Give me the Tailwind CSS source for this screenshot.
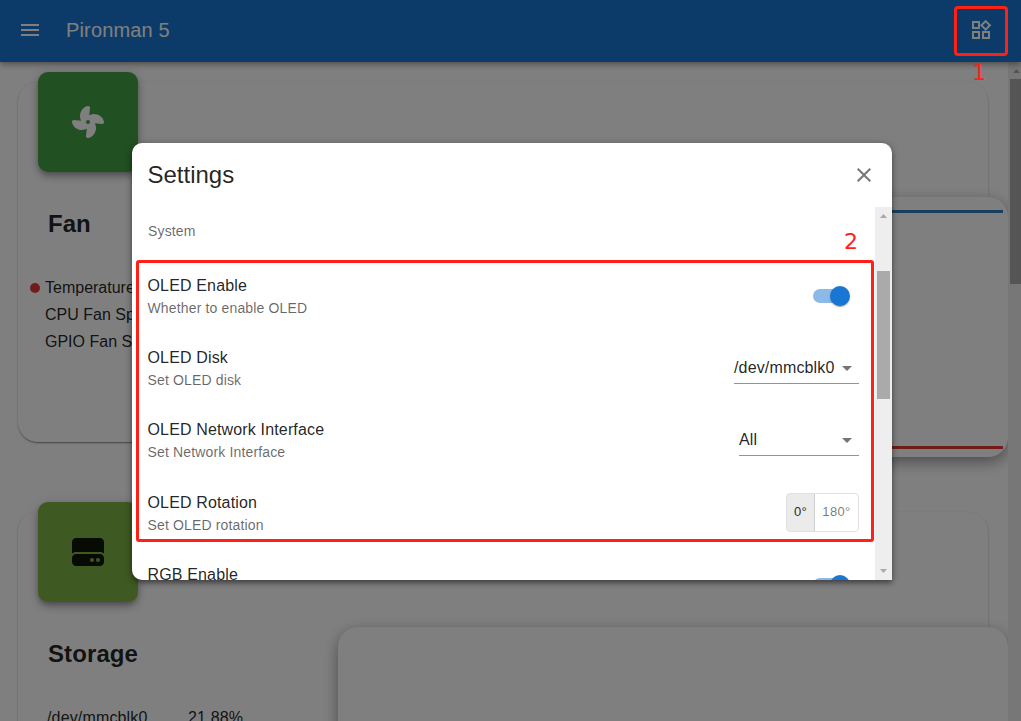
<!DOCTYPE html>
<html lang="en">
<head>
<meta charset="utf-8">
<title>Pironman 5</title>
<script src="https://cdn.jsdelivr.net/npm/@tailwindcss/browser@4"></script>
</head>
<body class="relative flex h-[721px] w-[1021px] flex-col overflow-hidden bg-white font-['Liberation_Sans',Arial,sans-serif] text-base text-black/87">

  <header class="z-10 flex h-[62px] shrink-0 items-center bg-[#1976d2] pr-7 pb-0.5 pl-[18px] text-white shadow-[0_2px_4px_-1px_rgba(0,0,0,0.2),0_4px_5px_0_rgba(0,0,0,0.14),0_1px_10px_0_rgba(0,0,0,0.12)]">
    <svg class="size-6 fill-current" viewBox="0 0 24 24"><path d="M3 18h18v-2H3v2zm0-5h18v-2H3v2zm0-7v2h18V6H3z"/></svg>
    <h1 class="ml-6 flex-1 text-xl leading-8 tracking-[0.0075em]">Pironman 5</h1>
    <svg class="size-6 fill-current" viewBox="0 0 24 24"><path d="m16.66 4.52 2.83 2.83-2.83 2.83-2.83-2.83 2.83-2.83M9 5v4H5V5h4m10 10v4h-4v-4h4M9 15v4H5v-4h4m7.66-13.31L11 7.34 16.66 13l5.66-5.66-5.66-5.65zM11 3H3v8h8V3zm10 10h-8v8h8v-8zm-10 0H3v8h8v-8z"/></svg>
  </header>

  <div class="flex min-h-0 flex-1">
    <main class="flex flex-1 flex-col gap-[70px] overflow-hidden pt-5 pl-[18px]">
      <section class="relative h-[360px] w-[970px] shrink-0 rounded-[20px] bg-white pl-5 shadow-[0_2px_1px_-1px_rgba(0,0,0,0.2),0_1px_1px_0_rgba(0,0,0,0.14),0_1px_3px_0_rgba(0,0,0,0.2)]">
        <div class="-mt-2.5 flex size-[100px] items-center justify-center rounded-[10px] bg-[#43a047] text-white shadow-[0_3px_5px_-1px_rgba(0,0,0,0.2),0_5px_8px_0_rgba(0,0,0,0.2),0_1px_14px_0_rgba(0,0,0,0.12)]">
          <svg class="size-8 fill-current" viewBox="0 0 512 512"><path d="M258.6 0c-1.7 0-3.4 .1-5.1 .5C168 17 115.6 102.3 130.5 189.3c2.9 17 8.4 32.9 15.9 47.4L32 224H29.4C13.2 224 0 237.2 0 253.4c0 1.7 .1 3.4 .5 5.1C17 344 102.3 396.4 189.3 381.5c17-2.9 32.9-8.4 47.4-15.9L224 480v2.6c0 16.2 13.2 29.4 29.4 29.4c1.7 0 3.4-.1 5.1-.5C344 495 396.4 409.7 381.5 322.7c-2.9-17-8.4-32.9-15.9-47.4L480 288h2.6c16.2 0 29.4-13.2 29.4-29.4c0-1.7-.1-3.4-.5-5.1C495 168 409.7 115.6 322.7 130.5c-17 2.9-32.9 8.4-47.4 15.9L288 32V29.4C288 13.2 274.8 0 258.6 0zM256 224a32 32 0 1 1 0 64 32 32 0 1 1 0-64z"/></svg>
        </div>
        <h2 class="mt-9 ml-2.5 text-2xl leading-8 font-bold">Fan</h2>
        <ul class="mt-[34px] -ml-2 w-[300px] leading-[27px]">
          <li class="flex items-center gap-[5px]"><span class="size-2.5 rounded-full bg-[#e53935]"></span>Temperature</li>
          <li class="pl-[15px]">CPU Fan Speed</li>
          <li class="pl-[15px]">GPIO Fan State</li>
        </ul>
        <div class="absolute top-[115px] left-[320px] flex h-[260px] w-[670px] flex-col rounded-[20px] bg-white px-[5px] pt-[13px] pb-2 shadow-[0_5px_15px_rgba(0,0,0,0.4)]">
          <div class="h-[3px] bg-[#2e7fb9]"></div>
          <div class="flex-1"></div>
          <div class="h-[3px] bg-[#e53935]"></div>
        </div>
      </section>

      <section class="relative h-[360px] w-[970px] shrink-0 rounded-[20px] bg-white pl-5 shadow-[0_2px_1px_-1px_rgba(0,0,0,0.2),0_1px_1px_0_rgba(0,0,0,0.14),0_1px_3px_0_rgba(0,0,0,0.2)]">
        <div class="-mt-2.5 flex size-[100px] items-center justify-center rounded-[10px] bg-[#7cb342] shadow-[0_3px_5px_-1px_rgba(0,0,0,0.2),0_5px_8px_0_rgba(0,0,0,0.2),0_1px_14px_0_rgba(0,0,0,0.12)]">
          <svg class="size-8 fill-current" viewBox="0 0 512 512"><path d="M0 96C0 60.7 28.7 32 64 32H448c35.3 0 64 28.7 64 64V280.4c-17-15.2-39.4-24.4-64-24.4H64c-24.6 0-47 9.2-64 24.4V96zM64 288H448c35.3 0 64 28.7 64 64v64c0 35.3-28.7 64-64 64H64c-35.3 0-64-28.7-64-64V352c0-35.3 28.7-64 64-64zM320 416a32 32 0 1 0 0-64 32 32 0 1 0 0 64zm128-32a32 32 0 1 0 -64 0 32 32 0 1 0 64 0z"/></svg>
        </div>
        <h2 class="mt-9 ml-2.5 text-2xl leading-8 font-bold tracking-[0.004em]">Storage</h2>
        <div class="mt-[34px] ml-[9px] flex leading-[27px] tracking-[0.00938em]"><span class="w-[141px]">/dev/mmcblk0</span><span>21.88%</span></div>
        <div class="absolute top-[115px] left-[320px] h-[260px] w-[670px] rounded-[20px] bg-white shadow-[0_5px_15px_rgba(0,0,0,0.4)]"></div>
      </section>
    </main>

    <div class="flex w-[13px] flex-col bg-[#eeeeee] pl-0.5">
      <svg class="h-[17px] w-[11px] fill-[#aaaaaa]" viewBox="0 0 11 17"><path d="M3 11h7L6.500 7z"/></svg>
      <div class="h-[205px] bg-[#aaaaaa]"></div>
    </div>
  </div>

  <!-- Settings dialog -->
  <div class="absolute inset-0 z-20 bg-black/50 pt-[143px] pl-[132px]">
    <div role="dialog" class="flex h-[437px] w-[760px] flex-col overflow-hidden rounded-t-[10px] rounded-bl-[10px] bg-white shadow-[0_3px_5px_rgba(0,0,0,0.4),0_1px_8px_rgba(0,0,0,0.2)]">
      <div class="flex h-16 shrink-0 items-center justify-between pr-4 pl-[15.5px]">
        <h2 class="text-2xl">Settings</h2>
        <svg class="size-6 fill-black/54" viewBox="0 0 24 24"><path d="M19 6.410 17.590 5 12 10.590 6.410 5 5 6.410 10.590 12 5 17.590 6.410 19 12 13.410 17.590 19 19 17.590 13.410 12z"/></svg>
      </div>
      <div class="flex min-h-0 flex-1">
        <div class="flex-1 overflow-hidden pr-4 pl-[15.5px] tracking-[0.00938em]">
          <h3 class="mb-1 pl-[0.5px] text-sm leading-[48px] tracking-[0.01071em] text-black/60">System</h3>
          <div class="flex h-[72px] items-center justify-between">
            <div class="pt-0.5"><p class="leading-6">OLED Enable</p><p class="text-sm leading-5 tracking-[0.01071em] text-black/60">Whether to enable OLED</p></div>
            <div class="mt-0.5 mr-[9px] flex h-5 w-[37px] items-center">
              <span class="h-3.5 w-[34px] rounded-full bg-[#8cbae8]"></span>
              <span class="-ml-[17px] size-5 shrink-0 rounded-full bg-[#1976d2] shadow-[0_2px_1px_-1px_rgba(0,0,0,0.2),0_1px_1px_0_rgba(0,0,0,0.14),0_1px_3px_0_rgba(0,0,0,0.12)]"></span>
            </div>
          </div>
          <div class="flex h-[72px] items-center justify-between">
            <div class="pt-0.5"><p class="leading-6">OLED Disk</p><p class="text-sm leading-5 tracking-[0.01071em] text-black/60">Set OLED disk</p></div>
            <div class="mt-px flex h-8 w-[125px] items-center justify-between border-b border-[#949494] pt-0.5">
              <span>/dev/mmcblk0</span>
              <svg class="size-6 fill-black/54" viewBox="0 0 24 24"><path d="m7 10 5 5 5-5z"/></svg>
            </div>
          </div>
          <div class="flex h-[72px] items-center justify-between">
            <div class="pt-0.5"><p class="leading-6">OLED Network Interface</p><p class="text-sm leading-5 tracking-[0.01071em] text-black/60">Set Network Interface</p></div>
            <div class="mt-px flex h-8 w-[120px] items-center justify-between border-b border-[#949494] pt-0.5">
              <span>All</span>
              <svg class="size-6 fill-black/54" viewBox="0 0 24 24"><path d="m7 10 5 5 5-5z"/></svg>
            </div>
          </div>
          <div class="flex h-[73px] items-center justify-between pt-px">
            <div class="pt-0.5"><p class="leading-6">OLED Rotation</p><p class="text-sm leading-5 tracking-[0.01071em] text-black/60">Set OLED rotation</p></div>
            <div class="flex h-[39px] w-[73px] overflow-hidden rounded border border-black/12 text-[13px] leading-[35px] tracking-[0.02857em]">
              <span class="w-7 shrink-0 border-r border-black/12 bg-black/8 text-center">0°</span>
              <span class="flex-1 text-center text-black/54">180°</span>
            </div>
          </div>
          <div class="flex h-[72px] justify-between">
            <p class="pt-[15px] leading-6">RGB Enable</p>
            <div class="mt-[27px] mr-[9px] flex h-5 w-[37px] items-center">
              <span class="h-3.5 w-[34px] rounded-full bg-[#8cbae8]"></span>
              <span class="-ml-[17px] size-5 shrink-0 rounded-full bg-[#1976d2]"></span>
            </div>
          </div>
        </div>
        <div class="flex w-[17px] flex-col items-center bg-[#eeeeee]">
          <svg class="h-[17px] w-[17px] fill-[#aaaaaa]" viewBox="0 0 17 17"><path d="M5 11h7L8.500 7z"/></svg>
          <div class="mt-[47px] h-32 w-[13px] bg-[#aaaaaa]"></div>
          <svg class="mt-auto h-[17px] w-[17px] fill-[#aaaaaa]" viewBox="0 0 17 17"><path d="M5 6h7L8.500 10z"/></svg>
        </div>
      </div>
    </div>
  </div>

  <!-- Numbered callouts -->
  <div class="absolute top-1.5 left-[954px] z-30 h-[50px] w-[54px] rounded-[4px] border-3 border-[#ff2116]"></div>
  <div class="absolute top-[57px] left-[972px] z-30 font-['DejaVu_Sans',sans-serif] text-[22px] leading-8 text-[#ff2116]">1</div>
  <div class="absolute top-[260px] left-[136px] z-30 h-[282px] w-[738px] rounded-[3px] border-3 border-[#ff2116]"></div>
  <div class="absolute top-[226px] left-[844px] z-30 font-['DejaVu_Sans',sans-serif] text-[22px] leading-8 text-[#ff2116]">2</div>
</body>
</html>
